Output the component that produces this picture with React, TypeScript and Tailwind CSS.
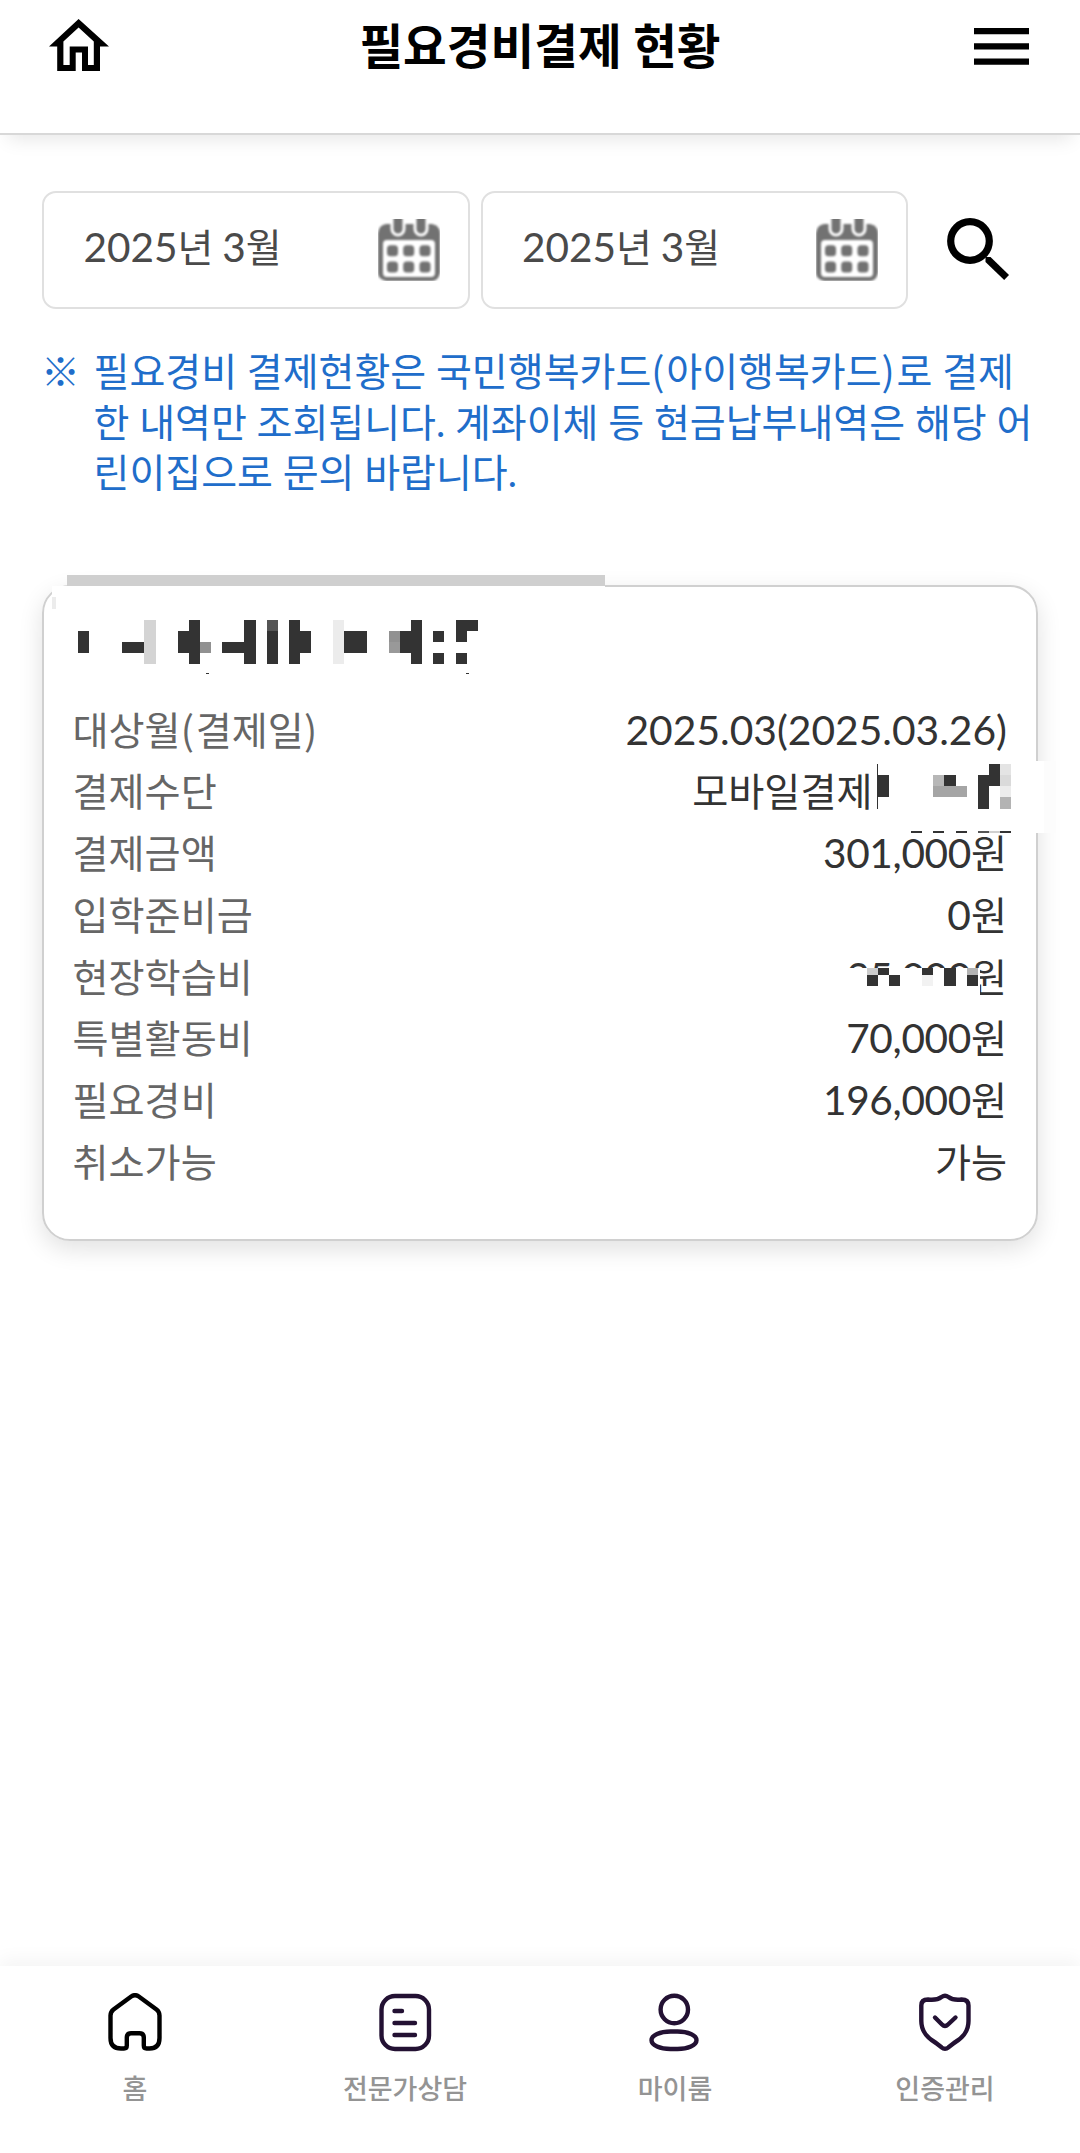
import React from "react";

const FONT = "font-[Lato,'Noto_Sans_CJK_KR',sans-serif]";

type Block = [x: number, y: number, w: number, h: number, fill?: string];

/* Pixelated privacy mask, in page coordinates. */
const MASK: Block[] = [
  [52, 586, 553, 30, "#ffffff"],
  [67, 575, 538, 11, "#cfcfcf"],
  [52, 597, 4, 12, "#ececec"],
  [78, 631, 11, 22],
  [122, 642, 22, 11],
  [144, 620, 12, 44, "#d4d4d4"],
  [178, 631, 11, 22],
  [189, 620, 11, 44],
  [200, 642, 11, 11, "#919191"],
  [222, 642, 22, 11],
  [244, 620, 12, 44],
  [267, 620, 11, 11, "#555555"],
  [267, 631, 11, 33],
  [289, 620, 11, 44],
  [300, 631, 11, 22],
  [333, 620, 11, 44, "#ececec"],
  [344, 631, 23, 22],
  [389, 631, 11, 11, "#919191"],
  [389, 642, 11, 11, "#999999"],
  [400, 631, 11, 22],
  [411, 620, 11, 44],
  [433, 631, 11, 11],
  [433, 653, 11, 11],
  [456, 620, 11, 22],
  [456, 653, 11, 11],
  [467, 620, 11, 11],
  [206, 673, 3, 1],
  [466, 673, 3, 1],
  [878, 761, 166, 72, "#ffffff"],
  [1044, 761, 12, 72, "#fcfcfc"],
  [877, 764, 1, 45],
  [878, 775, 11, 22],
  [933, 775, 11, 11, "#b7b7b7"],
  [944, 775, 12, 11],
  [933, 786, 34, 11, "#a5a5a5"],
  [989, 764, 11, 22],
  [978, 775, 11, 34],
  [1000, 764, 11, 11, "#e4e4e4"],
  [1000, 775, 11, 11, "#dadada"],
  [1000, 786, 11, 11, "#ececec"],
  [1000, 797, 11, 12, "#b3b3b3"],
  [911, 831, 11, 2],
  [933, 831, 11, 2],
  [956, 831, 11, 2],
  [978, 831, 11, 2, "#555555"],
  [989, 831, 11, 2, "#d0d0d0"],
  [1000, 831, 11, 2],
  [844, 968, 136, 30, "#ffffff"],
  [867, 968, 11, 7, "#cccccc"],
  [878, 968, 11, 7],
  [867, 975, 11, 11],
  [889, 975, 11, 11],
  [922, 968, 11, 7],
  [922, 975, 11, 11, "#f2f2f2"],
  [944, 968, 12, 18],
  [967, 968, 11, 7, "#b3b3b3"],
  [967, 975, 11, 11],
];

/* Sets digits slightly larger than the Hangul around them, and full-bodied brackets next to Hangul. */
function Mixed({ children }: { children: string }) {
  const numeric = /\d\(/.test(children);
  const parts = children.split(numeric ? /([\d.,()]+)/ : /(\d[\d,.]*|[()])/);
  return (
    <>
      {parts.map((part, i) => {
        if (i % 2 === 0) return part;
        if (part === "(" || part === ")")
          return (
            <span key={i} className="font-['Noto_Sans_CJK_KR',sans-serif] leading-none tracking-[1.8px]">
              {part}
            </span>
          );
        return (
          <span
            key={i}
            className={part.includes(",") ? "text-[1.035em] leading-none tracking-[-0.35px]" : "text-[1.04em] leading-none"}
          >
            {part}
          </span>
        );
      })}
    </>
  );
}

function CalendarIcon() {
  return (
    <svg width="62" height="62" viewBox="0 0 62 62" className="shrink-0 overflow-hidden">
      <g className="blur-[1px]">
        <path d="M8 5H54Q62 7 62 14V54Q60 62 54 62H8Q0 60 0 54V14Q1 6 8 5Z" fill="#727272" />
        <rect x="5" y="21" width="52" height="37" rx="4" fill="#ffffff" />
        <path
          d="M14 -4V10a6 6 0 0 0 12 0V-4M37 -4V10a6 6 0 0 0 12 0V-4"
          fill="#727272"
          stroke="#ffffff"
          strokeWidth="3"
        />
        {[14.5, 30.7, 47].map((x) =>
          [31.8, 48].map((y) => (
            <rect key={`${x}-${y}`} x={x - 5.5} y={y - 5.5} width="11" height="11" rx="3.5" fill="#727272" />
          )),
        )}
      </g>
    </svg>
  );
}

function MonthField({ value }: { value: string }) {
  return (
    <div className="flex h-[118px] w-[427.5px] items-center justify-between rounded-[14px] border-2 border-[#e0e0e0] pl-[39.500px] pr-[28px]">
      <span className="relative -top-[3px] text-[39px] leading-[58px] text-[#4a4a4a] [word-spacing:-1.2px]">
        <Mixed>{value}</Mixed>
      </span>
      <CalendarIcon />
    </div>
  );
}

const ROWS: [string, string][] = [
  ["대상월(결제일)", "2025.03(2025.03.26)"],
  ["결제수단", "모바일결제"],
  ["결제금액", "301,000원"],
  ["입학준비금", "0원"],
  ["현장학습비", "35,000원"],
  ["특별활동비", "70,000원"],
  ["필요경비", "196,000원"],
  ["취소가능", "가능"],
];

const NAV: { label: string; color: string; icon: React.ReactNode }[] = [
  {
    label: "홈",
    color: "#000000",
    icon: (
      <path d="M26.2 3.5Q30 .8 33.800 3.500L51.500 16.500Q54.500 18.800 54.500 22.500V45Q54.500 55.500 44.500 55.500H41.500Q38.800 55.500 38.800 52.500V44.500Q38.800 40.300 34.600 40.300H26Q21.800 40.300 21.800 44.500V52.500Q21.800 55.500 19 55.500H16Q5.500 55.500 5.500 45V22.500Q5.500 18.800 8.500 16.500Z" />
    ),
  },
  {
    label: "전문가상담",
    color: "#231133",
    icon: (
      <>
        <rect x="6.500" y="3" width="47.500" height="53" rx="13.500" />
        <path d="M19.500 18h7.500M19.500 30h20.500M19.500 42h20.500" />
      </>
    ),
  },
  {
    label: "마이룸",
    color: "#231133",
    icon: (
      <>
        <circle cx="29.300" cy="16.500" r="13.700" />
        <rect x="6.500" y="38.500" width="45" height="17.500" rx="19" ry="9" />
      </>
    ),
  },
  {
    label: "인증관리",
    color: "#231133",
    icon: (
      <>
        <path d="M26.500 4Q30 1.700 33.500 4Q38 7.500 46.500 6.500Q53.500 6.500 53.500 12.500V28C53.500 39 47.500 45 39 50L33.500 54.300Q30 57.300 26.500 54.300L21 50C12.500 45 6.300 39 6.300 28V12.500Q6.300 6.500 13 6.500Q22 7.500 26.500 4Z" />
        <path d="M20 24.500L27 31.500Q30 34.500 33 31.500L40.500 24.500" />
      </>
    ),
  },
];

export default function App() {
  return (
    <div className={`flex h-[2153px] w-[1080px] flex-col overflow-hidden bg-white ${FONT}`}>
      <header className="flex h-[135px] shrink-0 items-start justify-between border-b-2 border-[#d8d8d8] pl-[49px] pr-[51px] shadow-[0_12px_18px_-8px_rgba(0,0,0,0.1)]">
        <svg width="60" height="52" viewBox="0 0 60 52" className="mt-[19px]">
          <path
            fillRule="evenodd"
            d="M29.600 0L60 27.500H51V52H33V33.500H26.700V52H8.200V27.500H0ZM29.600 8.500L14.400 22.500V46H20.700V27.500H39V46H44.800V22.500Z"
          />
        </svg>
        <h1 className="mr-[3px] mt-[10.500px] text-[47.5px] font-bold leading-[70px] text-black">필요경비결제 현황</h1>
        <svg width="55" height="37" viewBox="0 0 55 37" className="mt-[28px]">
          <path d="M0 0h55v6.200H0zM0 15.300h55v6.200H0zM0 30.600h55v6.200H0z" />
        </svg>
      </header>

      <main className="flex grow flex-col px-[42px] pt-[56px]">
        <div className="flex items-center">
          <MonthField value="2025년 3월" />
          <div className="w-[11px]" />
          <MonthField value="2025년 3월" />
          <svg width="62" height="62" viewBox="0 0 62 62" className="-mt-[2px] ml-[39px]">
            <circle cx="23" cy="23" r="19.300" fill="none" stroke="#000" strokeWidth="7.200" />
            <path d="M38.500 39h5L62 57l-4.800 5L38.500 44Z" />
          </svg>
        </div>

        <div className="mt-[37px] flex text-[39px] leading-[50.5px] text-[#206dca] [word-spacing:-0.2px]">
          <span className="-ml-px w-[52.500px] shrink-0 font-bold">※</span>
          <p className="-mr-5 whitespace-nowrap">
            <Mixed>필요경비 결제현황은 국민행복카드(아이행복카드)로 결제</Mixed>
            <br />한 내역만 조회됩니다. 계좌이체 등 현금납부내역은 해당 어
            <br />
            린이집으로 문의 바랍니다.
          </p>
        </div>

        <section className="relative mt-[87px] h-[656px] rounded-[28px] border-2 border-[#d0d0d0] pl-[28.500px] pr-[29px] pt-[112px] shadow-[0_8px_24px_rgba(0,0,0,0.12)]">
          <dl>
            {ROWS.map(([label, value], i) => (
              <div key={label} className="flex h-[61.8px] items-center justify-between text-[39.2px] leading-[61.8px]">
                <dt className="text-[#666666]">
                  <Mixed>{label}</Mixed>
                </dt>
                <dd className={i === 1 ? "pr-[134.500px] text-[#333333]" : "text-[#333333]"}>
                  <Mixed>{value}</Mixed>
                </dd>
              </div>
            ))}
          </dl>
          <svg
            width="1020"
            height="430"
            viewBox="42 575 1020 430"
            shapeRendering="crispEdges"
            className="absolute -left-[2px] -top-[12px] max-w-none"
          >
            {MASK.map(([x, y, w, h, fill = "#333333"], i) => (
              <rect key={i} x={x} y={y} width={w} height={h} fill={fill} />
            ))}
          </svg>
        </section>
      </main>

      <nav className="grid h-[187px] shrink-0 grid-cols-4 bg-white shadow-[0_-8px_16px_rgba(0,0,0,0.04)]">
        {NAV.map(({ label, color, icon }) => (
          <div key={label} className="flex flex-col items-center pt-[26.500px]">
            <svg
              width="60"
              height="60"
              viewBox="0 0 60 60"
              fill="none"
              stroke={color}
              strokeWidth="4.4"
              strokeLinecap="round"
              strokeLinejoin="round"
            >
              {icon}
            </svg>
            <span className="mt-[16.500px] text-[27px] font-medium leading-[40px] text-[#949494]">{label}</span>
          </div>
        ))}
      </nav>
    </div>
  );
}
